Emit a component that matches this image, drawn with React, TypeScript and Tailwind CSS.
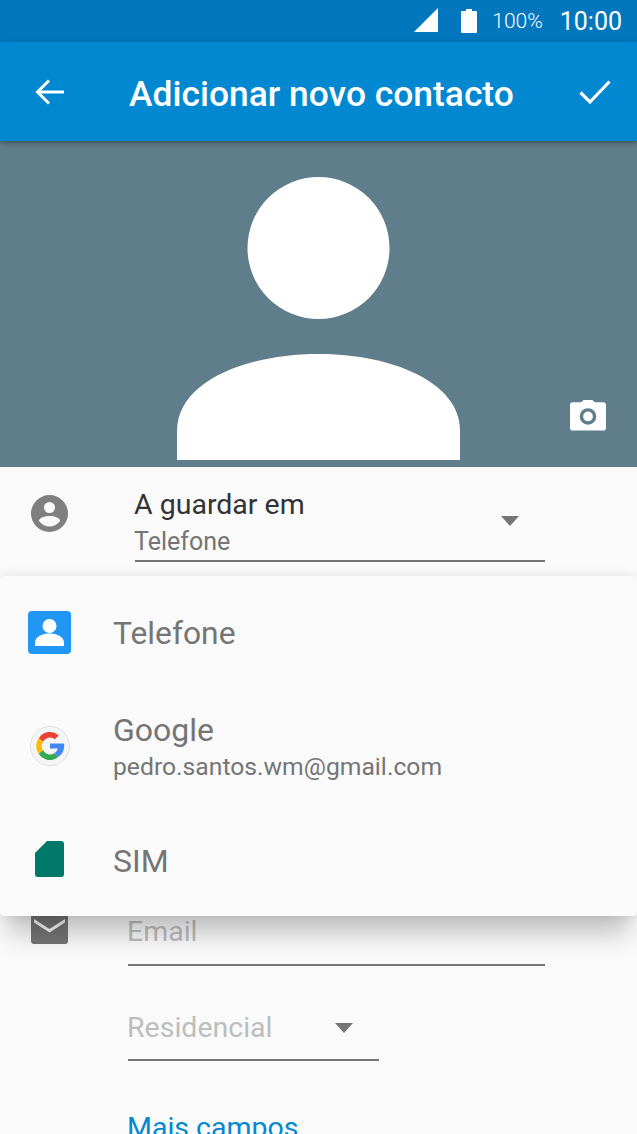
import { ReactNode } from 'react';

const font = { fontFamily: 'Roboto, sans-serif' };

const StatusBar = () => (
    <div className="h-[42px] bg-[#0277bd] flex items-center justify-end pr-[15px] text-white">
        <svg width="26" height="26" viewBox="0 0 26 26" className="mr-[21px] mt-[-2px]">
            <path d="M1 25 L25 1 V25 Z" fill="#fff" />
        </svg>
        <svg width="18" height="26" viewBox="0 0 18 26" className="mr-[14px] mt-[-1px]">
            <path d="M6 1 H12 V3 H16 a1 1 0 0 1 1 1 V24 a1 1 0 0 1 -1 1 H2 a1 1 0 0 1 -1 -1 V4 a1 1 0 0 1 1 -1 H6 Z" fill="#fff" />
        </svg>
        <span className="text-[21px] font-light mr-[17px] leading-none">100%</span>
        <span className="text-[25px] font-normal leading-none">10:00</span>
    </div>
);

const Toolbar = () => (
    <div className="relative z-10 h-[99px] bg-[#0288d1] flex items-center shadow-[0_2px_5px_rgba(0,0,0,0.35)] text-white">
        <svg width="30" height="30" viewBox="0 0 30 30" fill="none" stroke="#fff" strokeWidth="3" className="ml-[35px]">
            <path d="M29 15 H3 M14 3.5 L2.5 15 L14 26.5" />
        </svg>
        <span className="ml-[64px] pt-[7px] text-[35.4px] font-medium leading-none">Adicionar novo contacto</span>
        <svg width="32" height="26" viewBox="0 0 32 26" fill="none" stroke="#fff" strokeWidth="3.2" className="ml-auto mr-[26px]">
            <path d="M1.5 13.5 L11 23 L30.5 2.5" />
        </svg>
    </div>
);

const Hero = () => (
    <div className="relative h-[326px] bg-[#607d8b] flex justify-center pt-[36px]">
        <svg width="283" height="283" viewBox="0 0 283 283">
            <circle cx="141.5" cy="71" r="71" fill="#fff" />
            <path d="M0 283 V254 C0 204 70 177 141.5 177 C213 177 283 204 283 254 V283 Z" fill="#fff" />
        </svg>
        <svg width="36" height="32" viewBox="0 0 37 32" className="absolute right-[31px] top-[258px]">
            <path fillRule="evenodd" d="M11.5 3 L14 0.5 H23 L25.5 3 H34 a3 3 0 0 1 3 3 V29 a3 3 0 0 1 -3 3 H3 a3 3 0 0 1 -3 -3 V6 a3 3 0 0 1 3 -3 Z M18.5 9 a8.5 8.5 0 1 0 0 17 a8.5 8.5 0 0 0 0 -17 Z M18.5 12.5 a5 5 0 1 1 0 10 a5 5 0 0 1 0 -10 Z" fill="#fff" />
        </svg>
    </div>
);

const Caret = () => (
    <svg width="18" height="10" viewBox="0 0 18 10">
        <path d="M0 0 H18 L9 10 Z" fill="#757575" />
    </svg>
);

const MenuRow = ({ icon, className, children }: { icon: ReactNode; className: string; children: ReactNode }) => (
    <div className={`flex items-center ${className}`}>
        <div className="w-[113px] flex justify-center pr-[14px]">{icon}</div>
        <div>{children}</div>
    </div>
);

const AccountMenu = () => (
    <div className="absolute left-0 right-0 top-[576px] h-[340px] bg-[#fafafa] rounded-[4px] shadow-[0_0_12px_rgba(0,0,0,0.1),0_26px_24px_-8px_rgba(0,0,0,0.22)]">
        <MenuRow
            className="h-[116px]"
            icon={
                <svg width="43" height="43" viewBox="0 0 43 43" className="mt-[-3px]">
                    <rect width="43" height="43" rx="4" fill="#2196f3" />
                    <circle cx="21.5" cy="15" r="7" fill="#fff" />
                    <path d="M7 32 C7 25 15 22.5 21.5 22.5 C28 22.5 36 25 36 32 V35 H7 Z" fill="#fff" />
                </svg>
            }
        >
            <span className="text-[31.8px] leading-none text-[#757575]">Telefone</span>
        </MenuRow>
        <MenuRow
            className="h-[110px]"
            icon={
                <svg width="42" height="42" viewBox="0 0 42 42" className="mt-[-2px]">
                    <circle cx="21" cy="21" r="19.5" fill="#f5f5f5" stroke="#e0e0e0" />
                    <g transform="translate(21 21) scale(1.28) translate(-21 -21)">
                        <path d="M12.2 15 A10 10 0 0 1 27.8 12.8 L24.8 15.8 A6 6 0 0 0 15.6 17.6 Z" fill="#ea4335" />
                        <path d="M12.2 15 A10 10 0 0 0 12.2 27 L15.6 24.4 A6 6 0 0 1 15.6 17.6 Z" fill="#fbbc05" />
                        <path d="M12.2 27 A10 10 0 0 0 27.6 29.4 L24.4 26.6 A6 6 0 0 1 15.6 24.4 Z" fill="#34a853" />
                        <path d="M21 19 H32 C32.6 23.5 30.8 27.2 27.6 29.4 L24.4 26.6 C25.9 25.7 26.7 24.6 27 23 H21 Z" fill="#4285f4" />
                    </g>
                </svg>
            }
        >
            <div className="text-[32px] leading-[36px] text-[#757575]">Google</div>
            <div className="text-[24.7px] leading-[32px] text-[#757575] mt-[3px]">pedro.santos.wm@gmail.com</div>
        </MenuRow>
        <MenuRow
            className="h-[114px]"
            icon={
                <svg width="29" height="36" viewBox="0 0 29 36">
                    <path d="M12 0 H26 a3 3 0 0 1 3 3 V33 a3 3 0 0 1 -3 3 H3 a3 3 0 0 1 -3 -3 V12 Z" fill="#00796b" />
                </svg>
            }
        >
            <span className="block pt-[3px] text-[32px] leading-none text-[#757575]">SIM</span>
        </MenuRow>
    </div>
);

export default function App() {
    return (
        <div className="relative w-[637px] h-[1134px] overflow-hidden bg-[#fafafa]" style={font}>
            <StatusBar />
            <Toolbar />
            <Hero />

            {/* A guardar em */}
            <div className="flex pl-[31px] pr-[92px] pt-[19px]">
                <svg width="37" height="37" viewBox="0 0 37 37" className="mt-[9px]">
                    <path fillRule="evenodd" d="M18.5 0 a18.5 18.5 0 1 0 0 37 a18.5 18.5 0 0 0 0 -37 Z M18.5 7 a5.5 5.5 0 1 1 0 11 a5.5 5.5 0 0 1 0 -11 Z M18.5 21 c4.5 0 10.5 1.8 10.5 5 c-2.5 3.5 -6.3 5.5 -10.5 5.5 c-4.2 0 -8 -2 -10.5 -5.5 c0 -3.2 6 -5 10.5 -5 Z" fill="#808080" />
                </svg>
                <div className="ml-[67px] flex-1 h-[76px] border-b-2 border-[#757575] relative">
                    <div className="ml-[-1px] text-[28.5px] leading-[38px] text-[#333]">A guardar em</div>
                    <div className="ml-[-1px] text-[25px] leading-[32px] text-[#757575] mt-[2px]">Telefone</div>
                    <div className="absolute right-[26px] top-[30px]">
                        <Caret />
                    </div>
                </div>
            </div>

            {/* form rows under the menu */}
            <div className="flex pl-[31px] pr-[92px] pt-[350px]">
                <svg width="37" height="30" viewBox="0 0 37 30" className="mt-[2px]">
                    <path fillRule="evenodd" d="M3 0 H34 a3 3 0 0 1 3 3 V27 a3 3 0 0 1 -3 3 H3 a3 3 0 0 1 -3 -3 V3 a3 3 0 0 1 3 -3 Z M3 5 L18.5 15 L34 5 V8.5 L18.5 18.5 L3 8.5 Z" fill="#757575" />
                </svg>
                <div className="ml-[60px] flex-1 h-[54px] border-b-2 border-[#757575] text-[28.5px] leading-[38px] text-[#bdbdbd]">
                    <span className="ml-[-1px] block pt-[1px]">Email</span>
                </div>
            </div>
            <div className="ml-[128px] mt-[43px] w-[251px] h-[52px] border-b-2 border-[#757575] flex justify-between pr-[26px] text-[28.5px] leading-[38px] text-[#bdbdbd]">
                <span className="ml-[-1px]">Residencial</span>
                <div className="pt-[14px]">
                    <Caret />
                </div>
            </div>
            <div className="ml-[127px] mt-[48px] text-[28.5px] leading-[38px] text-[#0288d1]">Mais campos</div>

            <AccountMenu />
        </div>
    );
}
